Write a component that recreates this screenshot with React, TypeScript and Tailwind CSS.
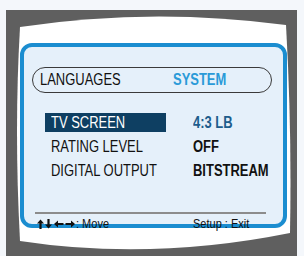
import React from 'react';

const sans = { fontFamily: '"Liberation Sans", Arial, sans-serif' };

const rows = [
  { label: 'TV SCREEN', value: '4:3 LB', active: true },
  { label: 'RATING LEVEL', value: 'OFF', active: false },
  { label: 'DIGITAL OUTPUT', value: 'BITSTREAM', active: false },
];

// the panel font is a narrow grotesque; squeeze Liberation Sans to match
const Narrow: React.FC<{ children: React.ReactNode; className?: string }> = ({ children, className = '' }) => (
  <span className={`inline-block whitespace-nowrap origin-left scale-x-[0.81] ${className}`}>{children}</span>
);

// small bold arrow, drawn pointing up then rotated
const Arrow: React.FC<{ rot: number }> = ({ rot }) => {
  const side = rot === 90 || rot === 270;
  return (
    <svg width={side ? 11 : 7} height="10" viewBox={side ? '0 0 11 10' : '0 0 7 10'}>
      <g transform={side ? `rotate(${rot} 5.5 5)` : `rotate(${rot} 3.5 5)`}>
        <g transform={side ? 'translate(2 0)' : ''}>
          <path d="M3.5 0.5 L7 4.5 L4.6 4.5 L4.6 10 L2.4 10 L2.4 4.5 L0 4.5 Z" fill="#111" />
        </g>
      </g>
    </svg>
  );
};

const App: React.FC = () => {
  return (
    <div className="w-[304px] h-[256px] bg-[#f4f7fb] pt-[10px] pl-[6px] pr-[7px] overflow-hidden" style={sans}>
      <div className="relative w-[291px] h-[246px] bg-[#5f5f5f] pt-[33px] pl-[14px]">
        {/* screen glass */}
        <svg className="absolute inset-0" width="291" height="246" viewBox="0 0 291 246">
          <path d="M14 17 Q145 -3 280 15 Q286 120 284 223 Q145 251 14 231 Q8 120 14 17 Z" fill="#ffffff" />
        </svg>

        <div className="relative w-[267px] h-[185px] border-4 border-[#1b8dd0] rounded-[12px] bg-[#e5f0fa]">
          {/* tabs */}
          <div className="ml-[8px] mt-[20px] w-[240px] h-[26px] rounded-full border border-[#3a3a3a] flex items-center pl-[7px] text-[16px] leading-none">
            <span className="w-[133px] text-[#111]"><Narrow>LANGUAGES</Narrow></span>
            <span className="font-bold text-[#2a9ad8]"><Narrow>SYSTEM</Narrow></span>
          </div>

          {/* settings */}
          <div className="mt-[20px] ml-[21px] flex flex-col gap-[5px] text-[16px] leading-none">
            {rows.map((r) => (
              <div key={r.label} className="flex items-center h-[19px]">
                <div className={`w-[121px] h-[19px] flex items-center pl-[6px] ${r.active ? 'bg-[#0e3f62] text-white' : 'text-[#111]'}`}>
                  <Narrow>{r.label}</Narrow>
                </div>
                <div className={`ml-[27px] font-bold ${r.active ? 'text-[#1d5d8c]' : 'text-[#111]'}`}>
                  <Narrow>{r.value}</Narrow>
                </div>
              </div>
            ))}
          </div>

          <div className="mt-[32px] ml-[11px] w-[231px] h-[2px] bg-[#8c8c8c]" />

          {/* footer */}
          <div className="mt-[4px] ml-[13px] flex items-center text-[12.5px] leading-none text-[#111]">
            <span className="w-[156px] flex items-center whitespace-nowrap">
              <span className="flex items-center gap-[1px]">
                <Arrow rot={0} />
                <Arrow rot={180} />
                <Arrow rot={270} />
                <Arrow rot={90} />
              </span>
              <span className="inline-block origin-left scale-x-[0.88]">: Move</span>
            </span>
            <span className="inline-block whitespace-nowrap origin-left scale-x-[0.88]">Setup : Exit</span>
          </div>
        </div>
      </div>
    </div>
  );
};

export default App;
